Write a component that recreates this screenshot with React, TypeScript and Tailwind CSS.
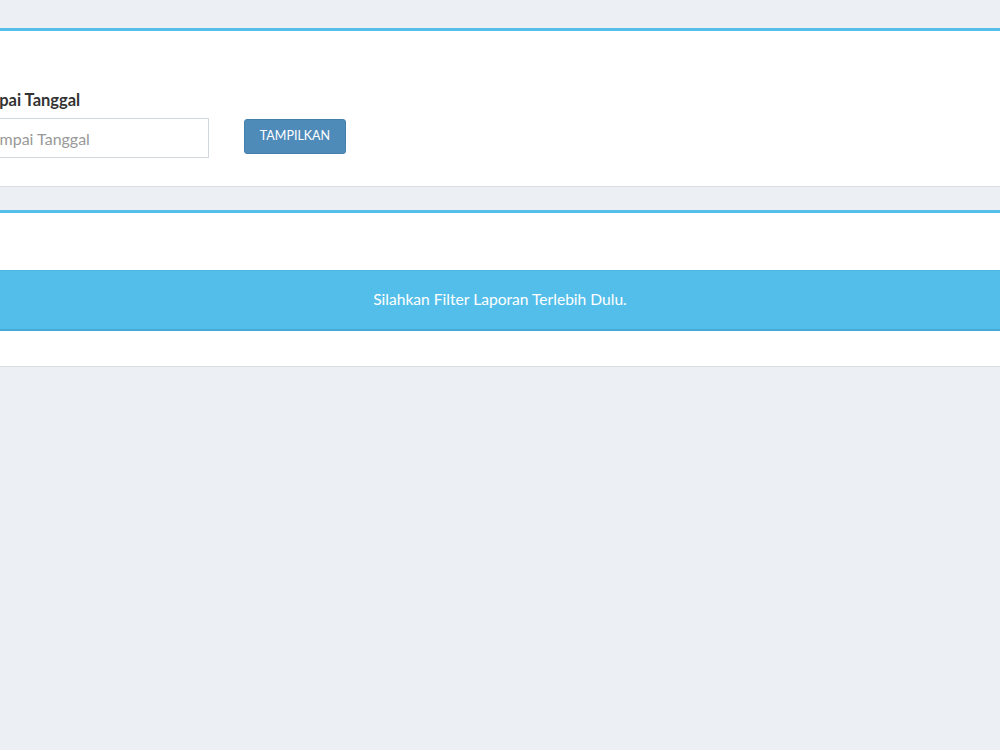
import React from "react";

const font = { fontFamily: "Lato, 'Open Sans', 'Liberation Sans', sans-serif" };

const App: React.FC = () => {
  return (
    <div
      className="w-[1000px] h-[750px] overflow-hidden bg-[#ecf0f5] text-[#333]"
      style={font}
    >
      <div className="pt-[28px]">
        {/* filter box */}
        <div className="bg-white border-t-[3px] border-[#55bfea] border-b border-b-[#d9dde2] h-[159px]">
          <div className="flex items-end gap-[35px] pt-[59px] ml-[-30px]">
            <div className="flex flex-col w-[239px]">
              <label className="text-[16.5px] font-bold text-[#333] leading-[20px] mb-[8px] ml-[-2px]">
                Sampai Tanggal
              </label>
              <input
                placeholder="Sampai Tanggal"
                className="h-[40px] border border-[#d2d6de] px-[12px] text-[16px] placeholder:text-[#999] outline-none"
                style={font}
              />
            </div>
            <button
              className="mb-[4px] h-[35px] w-[102px] rounded-[3px] bg-[#4e8bb9] border border-[#4580ab] text-white text-[12.5px]"
              style={font}
            >
              TAMPILKAN
            </button>
          </div>
        </div>

        {/* report box */}
        <div className="mt-[23px] bg-white border-t-[3px] border-[#55bfea] border-b border-b-[#d9dde2]">
          <div className="pt-[57px] pb-[35px]">
            <div className="h-[61px] bg-[#53bee9] border-t border-[#4bb8e3] border-b-[2px] border-b-[#45aad6] flex items-center justify-center text-white text-[15.6px]">
              Silahkan Filter Laporan Terlebih Dulu.
            </div>
          </div>
        </div>
      </div>
    </div>
  );
};

export default App;
